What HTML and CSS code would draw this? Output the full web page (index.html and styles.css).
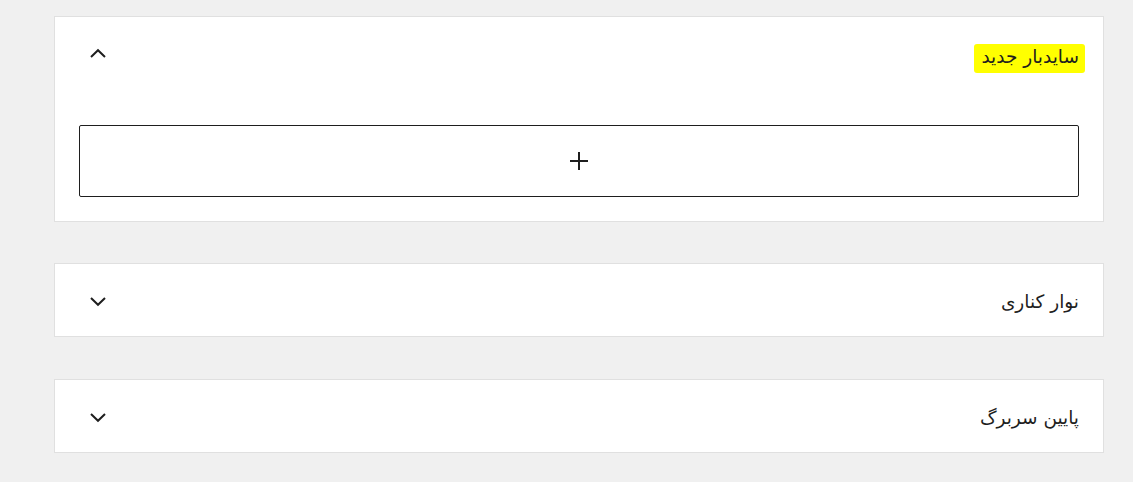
FILE: index.html
```html
<!DOCTYPE html>
<html lang="fa" dir="rtl">
<head>
    <meta charset="UTF-8">
    <meta name="viewport" content="width=device-width, initial-scale=1.0">
    <title>Sidebars</title>
    <link rel="stylesheet" href="styles.css">
</head>
<body>
    <div class="panel-list">
        <div class="panel is-open">
            <div class="panel-header">
                <span class="panel-title highlight">سایدبار جدید</span>
                <svg class="chevron" width="18" height="10" viewBox="0 0 18 10">
                    <polyline points="2,9 9,2.2 16,9" fill="none" stroke="#1e1e1e" stroke-width="2"/>
                </svg>
            </div>
            <div class="panel-body">
                <button class="add-block" type="button">
                    <svg width="20" height="20" viewBox="0 0 20 20">
                        <path d="M10 1v18M1 10h18" stroke="#1e1e1e" stroke-width="2" fill="none"/>
                    </svg>
                </button>
            </div>
        </div>

        <div class="panel">
            <div class="panel-header">
                <span class="panel-title">نوار کناری</span>
                <svg class="chevron" width="18" height="10" viewBox="0 0 18 10">
                    <polyline points="2,1 9,7.8 16,1" fill="none" stroke="#1e1e1e" stroke-width="2"/>
                </svg>
            </div>
        </div>

        <div class="panel">
            <div class="panel-header">
                <span class="panel-title">پایین سربرگ</span>
                <svg class="chevron" width="18" height="10" viewBox="0 0 18 10">
                    <polyline points="2,1 9,7.8 16,1" fill="none" stroke="#1e1e1e" stroke-width="2"/>
                </svg>
            </div>
        </div>
    </div>
</body>
</html>
```

FILE: styles.css
```css
body {
    margin: 0;
    background: #f0f0f0;
    font-family: 'DejaVu Sans', 'Noto Sans', sans-serif;
    color: #1e1e1e;
}
.panel-list {
    width: 1050px;
    margin-right: 29px;
    padding-top: 16px;
    display: flex;
    flex-direction: column;
    gap: 41px;
}
.panel + .panel + .panel {
    margin-top: 1px;
}
.panel {
    background: #fff;
    border: 1px solid #e0e0e0;
}
.panel-header {
    height: 72px;
    display: flex;
    align-items: center;
    justify-content: space-between;
    padding: 0 24px 0 34px;
}
.panel-title {
    font-size: 18.5px;
    line-height: 24px;
    margin-top: 3px;
}
.chevron {
    margin-top: 3px;
}
.is-open .panel-header {
    align-items: flex-start;
    padding-top: 27px;
    box-sizing: border-box;
}
.is-open .panel-title {
    margin-top: 0;
}
.is-open .chevron {
    margin-top: 4px;
}
.highlight {
    background: #ffff00;
    padding: 1px 6px 4px 7px;
    margin-left: -7px;
    margin-right: -6px;
    border-radius: 3px;
}
.panel-body {
    padding: 36px 24px 24px 24px;
}
.add-block {
    display: flex;
    align-items: center;
    justify-content: center;
    width: 100%;
    height: 72px;
    background: #fff;
    border: 1px solid #1e1e1e;
    border-radius: 2px;
    cursor: pointer;
}
```
